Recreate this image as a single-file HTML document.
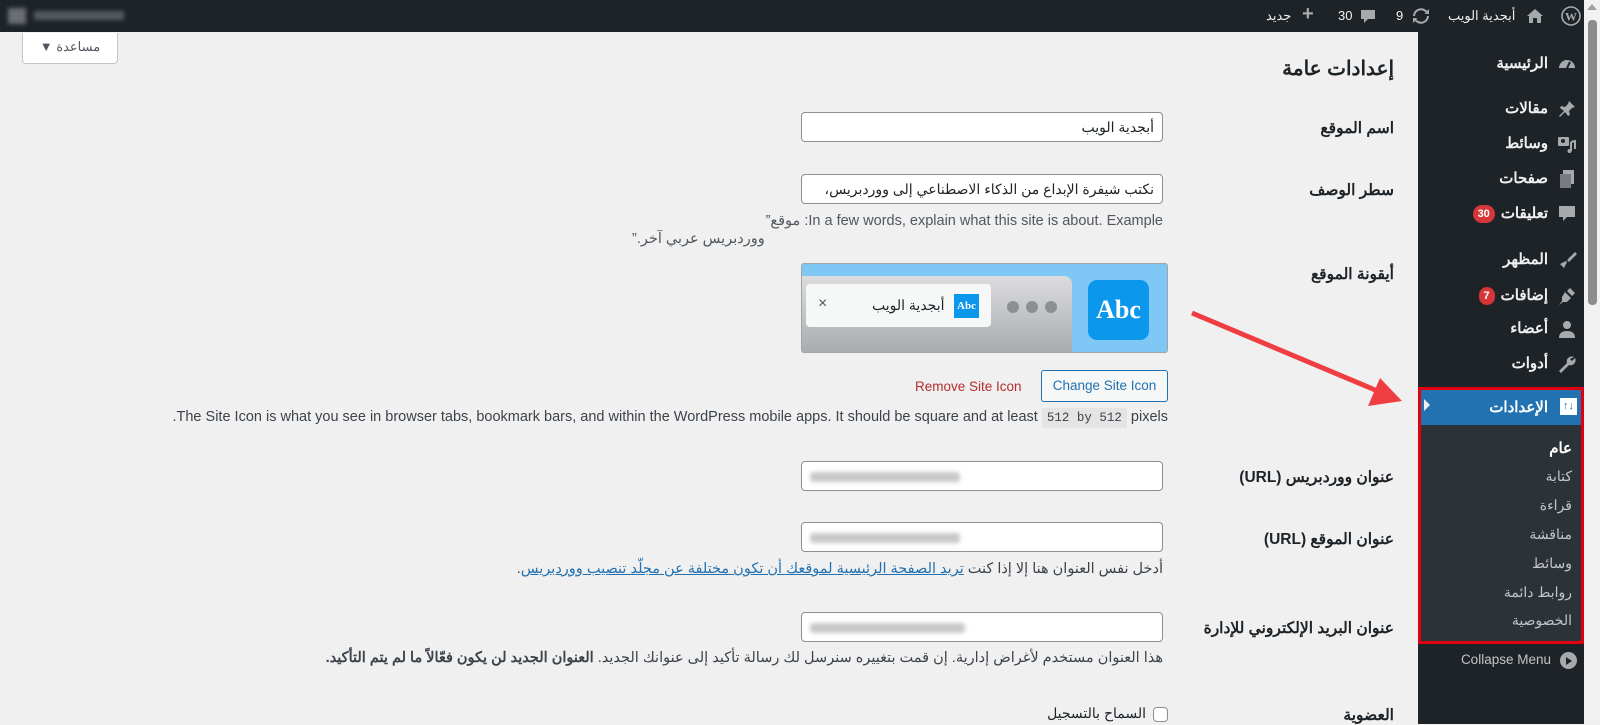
<!DOCTYPE html>
<html lang="ar" dir="rtl"><head><meta charset="utf-8">
<style>
*{box-sizing:border-box;margin:0;padding:0}
body{width:1600px;height:724px;overflow:hidden;background:#f0f0f1;font-family:"Liberation Sans","Noto Sans CJK SC",sans-serif;font-size:13px;color:#1d2327;position:relative}
.a{position:absolute;white-space:nowrap}
#bar{position:absolute;left:0;top:0;width:1600px;height:32px;background:#1d2327;color:#f0f0f1}
#side{position:absolute;left:1418px;top:32px;width:166px;height:692px;background:#1d2327}
#scroll{position:absolute;left:1584px;top:0;width:16px;height:724px;background:#f1f1f1}
.mi{position:absolute;right:36px;color:#f0f0f1;font-size:15px;font-weight:bold;white-space:nowrap}
.ic{position:absolute;right:7px;width:20px;height:20px}
.badge{display:inline-block;background:#d63638;color:#fff;border-radius:9px;font-size:11px;padding:0 5px;height:18px;line-height:18px;margin-right:6px;vertical-align:middle}
.sub{position:absolute;right:12px;color:#c3c4c7;font-size:14px;white-space:nowrap}
.lbl{position:absolute;right:206px;font-size:15.5px;font-weight:bold;white-space:nowrap}
.inp{position:absolute;left:801px;width:362px;height:30px;background:#fff;border:1px solid #8c8f94;border-radius:4px;padding:0 8px;line-height:28px;font-size:14px;text-align:right}
.blur{display:inline-block;height:10px;background:#c8c8c8;filter:blur(2px);border-radius:3px;vertical-align:middle}
.help{position:absolute;color:#50575e;font-size:14.5px;white-space:nowrap}
</style></head><body>
<div id="bar">
  <div class="a" style="left:8px;top:8px;width:18px;height:16px;background:#6b6f73;filter:blur(2px)"></div>
  <div class="a" style="left:34px;top:11px;width:90px;height:9px;background:#555a5f;filter:blur(2px)"></div>
  <svg class="a" style="left:1561px;top:6px" width="20" height="20" viewBox="0 0 20 20"><circle cx="10" cy="10" r="9" fill="none" stroke="#a7aaad" stroke-width="1.6"/><text x="10" y="14.5" text-anchor="middle" font-size="12" font-weight="bold" fill="#a7aaad" font-family="Liberation Serif">W</text></svg>
  <svg class="a" style="left:1526px;top:8px" width="18" height="16" viewBox="0 0 18 16"><path d="M9 1 L1 8 H3 V15 H7 V10 H11 V15 H15 V8 H17 Z" fill="#a7aaad"/></svg>
  <div class="a" style="left:1448px;top:8px;font-size:13px;color:#f0f0f1">أبجدية الويب</div>
  <svg class="a" style="left:1412px;top:8px" width="18" height="16" viewBox="0 0 18 16"><path d="M3 8a6 6 0 0 1 11-3l-2 1h5V1l-2 2A8 8 0 0 0 1 8z M15 8a6 6 0 0 1-11 3l2-1H1v5l2-2a8 8 0 0 0 14-5z" fill="#a7aaad"/></svg>
  <div class="a" style="left:1396px;top:8px;color:#f0f0f1">9</div>
  <svg class="a" style="left:1360px;top:9px" width="16" height="15" viewBox="0 0 16 15"><path d="M1 1h14v9H8l-4 4v-4H1z" fill="#a7aaad"/></svg>
  <div class="a" style="left:1338px;top:8px;color:#f0f0f1">30</div>
  <div class="a" style="left:1302px;top:3px;font-size:20px;color:#a7aaad;font-weight:bold">+</div>
  <div class="a" style="left:1266px;top:8px;color:#f0f0f1">جديد</div>
</div>

<div class="a" style="left:22px;top:33px;width:96px;height:31px;background:#fff;border:1px solid #c3c4c7;border-top:none;border-radius:0 0 4px 4px;color:#50575e;font-size:13px;text-align:center;line-height:28px">مساعدة ▼</div>

<div class="a" style="right:206px;top:56px;font-size:20px;font-weight:bold">إعدادات عامة</div>

<div class="lbl" style="top:119px">اسم الموقع</div>
<div class="inp" style="top:112px">أبجدية الويب</div>
<div class="lbl" style="top:181px">سطر الوصف</div>
<div class="inp" style="top:174px;overflow:hidden">نكتب شيفرة الإبداع من الذكاء الاصطناعي إلى ووردبريس، </div>
<div class="help" style="right:437px;top:213px;direction:ltr">”موقع :In a few words, explain what this site is about. Example</div>
<div class="help" style="left:632px;top:231px">ووردبريس عربي آخر.”</div>

<div class="lbl" style="top:265px">أيقونة الموقع</div>
<div class="a" style="left:801px;top:263px;width:367px;height:90px;background:#7fc8f5;border:1px solid #a0a5aa;border-radius:3px;overflow:hidden">
  <div class="a" style="left:0;top:12px;width:270px;height:80px;background:linear-gradient(#dcdcde,#a7aaad);border-radius:0 8px 0 0"></div>
  <div class="a" style="left:4px;top:20px;width:185px;height:43px;background:#f6f7f7;border-radius:4px"></div>
  <div class="a" style="left:16px;top:31px;font-size:16px;color:#50575e">×</div>
  <div class="a" style="left:70px;top:33px;font-size:14px;color:#1d2327">أبجدية الويب</div>
  <div class="a" style="left:152px;top:30px;width:25px;height:24px;background:#0a97ec;color:#fff;font-family:'Liberation Serif',serif;font-weight:bold;font-size:11px;text-align:center;line-height:24px">Abc</div>
  <div class="a" style="left:205px;top:37px;width:12px;height:12px;border-radius:6px;background:#8c8f94"></div>
  <div class="a" style="left:224px;top:37px;width:12px;height:12px;border-radius:6px;background:#8c8f94"></div>
  <div class="a" style="left:243px;top:37px;width:12px;height:12px;border-radius:6px;background:#8c8f94"></div>
  <div class="a" style="left:286px;top:16px;width:61px;height:60px;background:#0a97ec;border-radius:9px;color:#fff;font-family:'Liberation Serif',serif;font-weight:bold;font-size:26px;text-align:center;line-height:60px">Abc</div>
</div>
<div class="a" style="left:915px;top:379px;color:#b32d2e;font-size:13.5px;direction:ltr">Remove Site Icon</div>
<div class="a" style="left:1041px;top:370px;width:127px;height:32px;border:1px solid #2271b1;border-radius:3px;background:#f6f7f7;color:#2271b1;font-size:13.5px;text-align:center;line-height:30px;direction:ltr">Change Site Icon</div>
<div class="help" style="right:432px;top:409px;direction:ltr;color:#3c434a">.The Site Icon is what you see in browser tabs, bookmark bars, and within the WordPress mobile apps. It should be square and at least <span style="font-family:'Liberation Mono',monospace;font-size:12.5px;background:#e4e4e4;padding:3px 5px">512 by 512</span> pixels</div>

<div class="lbl" style="top:468px">عنوان ووردبريس (URL)</div>
<div class="inp" style="top:461px;text-align:left"><span class="blur" style="width:150px"></span></div>
<div class="lbl" style="top:530px">عنوان الموقع (URL)</div>
<div class="inp" style="top:522px;text-align:left"><span class="blur" style="width:150px"></span></div>
<div class="help" style="right:437px;top:561px;color:#3c434a">أدخل نفس العنوان هنا إلا إذا كنت <span style="color:#2271b1;text-decoration:underline">تريد الصفحة الرئيسية لموقعك أن تكون مختلفة عن مجلّد تنصيب ووردبريس</span>.</div>
<div class="lbl" style="top:619px">عنوان البريد الإلكتروني للإدارة</div>
<div class="inp" style="top:612px;text-align:left"><span class="blur" style="width:155px"></span></div>
<div class="help" style="right:437px;top:650px;color:#3c434a">هذا العنوان مستخدم لأغراض إدارية. إن قمت بتغييره سنرسل لك رسالة تأكيد إلى عنوانك الجديد. <b>العنوان الجديد لن يكون فعّالاً ما لم يتم التأكيد.</b></div>
<div class="lbl" style="top:706px">العضوية</div>
<div class="a" style="left:1153px;top:707px;width:15px;height:15px;border:1px solid #8c8f94;border-radius:4px;background:#fff"></div>
<div class="a" style="right:454px;top:705px;font-size:14px">السماح بالتسجيل</div>

<svg class="a" style="left:1180px;top:300px" width="240" height="110"><line x1="12" y1="13" x2="200" y2="92" stroke="#ef3e42" stroke-width="5"/><polygon points="222,101 188,106 200,78" fill="#ef3e42"/></svg>

<div id="side">
  <svg class="ic" style="top:22px" viewBox="0 0 20 20"><path d="M2 14a8 8 0 0 1 16 0z" fill="#a7aaad"/><path d="M10 14l3-6" stroke="#1d2327" stroke-width="2"/></svg><div class="mi" style="top:22px">الرئيسية</div>
  <svg class="ic" style="top:67px" viewBox="0 0 20 20"><path d="M12 2l6 6-3 1-3 3 1 4-2 1-3-4-5 5-1-1 5-5-4-3 1-2 4 1 3-3z" fill="#a7aaad"/></svg><div class="mi" style="top:67px">مقالات</div>
  <svg class="ic" style="top:102px" viewBox="0 0 20 20"><rect x="1" y="3" width="11" height="9" rx="1" fill="#a7aaad"/><circle cx="6" cy="7" r="2" fill="#1d2327"/><path d="M14 8v9M14 8l4-1v8" stroke="#a7aaad" stroke-width="2" fill="none"/><circle cx="12.5" cy="17" r="2" fill="#a7aaad"/></svg><div class="mi" style="top:102px">وسائط</div>
  <svg class="ic" style="top:137px" viewBox="0 0 20 20"><rect x="6" y="1" width="11" height="14" fill="#a7aaad"/><rect x="3" y="5" width="11" height="14" fill="#787c82"/></svg><div class="mi" style="top:137px">صفحات</div>
  <svg class="ic" style="top:172px" viewBox="0 0 20 20"><path d="M2 2h16v11h-8l-4 4v-4H2z" fill="#a7aaad"/></svg><div class="mi" style="top:172px">تعليقات<span class="badge">30</span></div>
  <svg class="ic" style="top:218px" viewBox="0 0 20 20"><path d="M18 2l-8 8 2 2 8-8zM9 11l-6 3 2 2 2 2 3-6z" fill="#a7aaad"/></svg><div class="mi" style="top:218px">المظهر</div>
  <svg class="ic" style="top:254px" viewBox="0 0 20 20"><path d="M13 2l-3 3 5 5 3-3zM8 6l6 6-4 4H6l-4 3 3-4V11z" fill="#a7aaad"/></svg><div class="mi" style="top:254px">إضافات<span class="badge">7</span></div>
  <svg class="ic" style="top:287px" viewBox="0 0 20 20"><circle cx="10" cy="6" r="4" fill="#a7aaad"/><path d="M2 19c0-5 3-7 8-7s8 2 8 7z" fill="#a7aaad"/></svg><div class="mi" style="top:287px">أعضاء</div>
  <svg class="ic" style="top:322px" viewBox="0 0 20 20"><path d="M17 3a5 5 0 0 0-7 6L2 17l2 2 8-8a5 5 0 0 0 6-7l-3 3-2-2z" fill="#a7aaad"/></svg><div class="mi" style="top:322px">أدوات</div>
  <div class="a" style="left:0;top:356px;width:166px;height:255px;background:#2c3338"></div>
  <div class="a" style="left:0;top:358px;width:166px;height:35px;background:#2271b1"></div>
  <div class="a" style="left:6px;top:367px;width:0;height:0;border-top:6px solid transparent;border-bottom:6px solid transparent;border-left:6px solid #f0f0f1"></div>
  <div class="a" style="right:7px;top:366px;width:17px;height:17px;background:#fff;color:#2271b1;font-size:11px;text-align:center;line-height:17px;font-weight:bold">↓↑</div>
  <div class="mi" style="top:366px;color:#fff">الإعدادات</div>
  <div class="sub" style="top:407px;color:#fff;font-weight:bold;font-size:15px">عام</div>
  <div class="sub" style="top:436px">كتابة</div>
  <div class="sub" style="top:465px">قراءة</div>
  <div class="sub" style="top:494px">مناقشة</div>
  <div class="sub" style="top:523px">وسائط</div>
  <div class="sub" style="top:552px">روابط دائمة</div>
  <div class="sub" style="top:580px">الخصوصية</div>
  <div class="a" style="left:0;top:355px;width:166px;height:257px;border:3px solid #e0000f"></div>
  <div class="a" style="right:7px;top:620px;width:17px;height:17px;border-radius:9px;background:#a7aaad"></div>
  <div class="a" style="right:12px;top:625px;width:0;height:0;border-top:4px solid transparent;border-bottom:4px solid transparent;border-left:6px solid #1d2327"></div>
  <div class="a" style="right:33px;top:620px;color:#c3c4c7;font-size:13.5px;direction:ltr">Collapse Menu</div>
</div>
<div id="scroll"><div class="a" style="left:4px;top:20px;width:9px;height:285px;background:#8c8c8c;border-radius:4px"></div><div class="a" style="left:3px;top:4px;width:0;height:0;border-left:5px solid transparent;border-right:5px solid transparent;border-bottom:6px solid #a0a0a0"></div></div>
</body></html>
